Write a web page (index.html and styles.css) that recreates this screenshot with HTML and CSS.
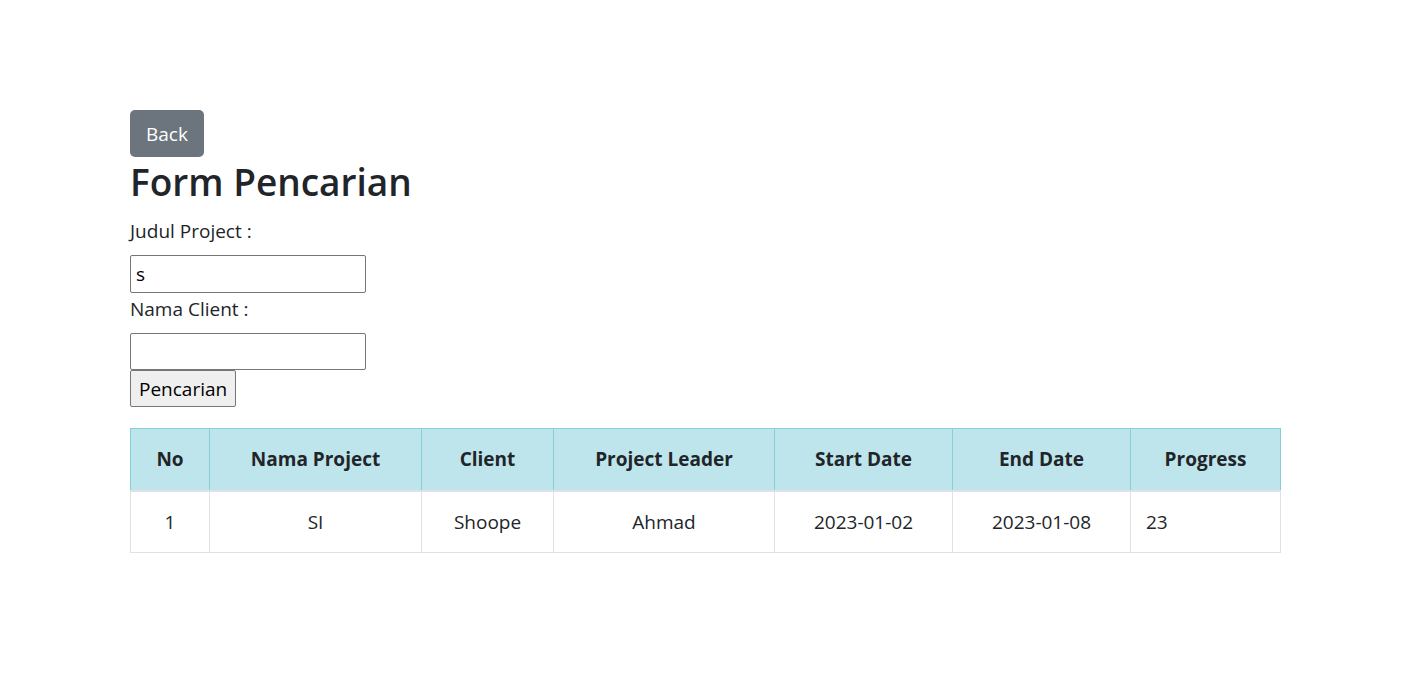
FILE: index.html
```html
<!DOCTYPE html>
<html lang="id">
<head>
<meta charset="utf-8">
<title>Form Pencarian</title>
<link rel="stylesheet" href="styles.css">
</head>
<body>
<div class="page">
  <a class="btn-back" href="#">Back</a>
  <h1 class="title">Form Pencarian</h1>
  <form class="search-form">
    <label class="field-label" for="judul">Judul Project :</label>
    <input class="field-input" id="judul" type="text" value="s">
    <label class="field-label second" for="client">Nama Client :</label>
    <input class="field-input short" id="client" type="text" value="">
    <button class="btn-search" type="button">Pencarian</button>
  </form>
  <table class="result-table">
    <thead>
      <tr>
        <th class="c-no">No</th>
        <th class="c-nama">Nama Project</th>
        <th class="c-client">Client</th>
        <th class="c-leader">Project Leader</th>
        <th class="c-start">Start Date</th>
        <th class="c-end">End Date</th>
        <th class="c-prog">Progress</th>
      </tr>
    </thead>
    <tbody>
      <tr>
        <td>1</td>
        <td>SI</td>
        <td>Shoope</td>
        <td>Ahmad</td>
        <td>2023-01-02</td>
        <td>2023-01-08</td>
        <td class="left">23</td>
      </tr>
    </tbody>
  </table>
</div>
</body>
</html>
```
FILE: styles.css
```css
* { box-sizing: border-box; }
html, body { margin: 0; padding: 0; background: #fff; }
body {
  font-family: "Open Sans", "Noto Sans", sans-serif;
  font-size: 19px;
  line-height: 30px;
  color: #212529;
}
.page {
  width: 1150px;
  margin-left: 130px;
  padding-top: 110px;
}
.btn-back {
  display: inline-flex;
  align-items: center;
  justify-content: center;
  width: 74px;
  height: 47px;
  background: #6c757d;
  color: #fff;
  border-radius: 5px;
  text-decoration: none;
  font-size: 19px;
}
.title {
  margin: 0 0 10px 0;
  font-size: 37px;
  line-height: 49px;
  font-weight: 600;
  color: #212529;
}
.search-form {
  display: flex;
  flex-direction: column;
  align-items: flex-start;
}
.field-label {
  display: block;
  line-height: 30px;
  margin-bottom: 9px;
}
.field-label.second { margin-top: 1px; }
.field-input {
  width: 236px;
  height: 38px;
  border: 1px solid #767676;
  border-radius: 2px;
  font-family: inherit;
  font-size: 19px;
  padding: 0 5px;
  color: #000;
}
.field-input.short { height: 37px; }
.btn-search {
  height: 37px;
  padding: 0 8px;
  background: #efefef;
  border: 1px solid #767676;
  border-radius: 2px;
  font-family: inherit;
  font-size: 19px;
  color: #000;
}
.result-table {
  margin-top: 21px;
  width: 1150px;
  border-collapse: collapse;
  table-layout: fixed;
}
.result-table th {
  background: #bee5eb;
  border: 1px solid #86cfda;
  border-bottom: 2px solid #dee2e6;
  height: 62px;
  font-weight: 700;
  text-align: center;
  vertical-align: middle;
  padding: 0 15px;
}
.result-table td {
  border: 1px solid #dee2e6;
  height: 62px;
  text-align: center;
  vertical-align: middle;
  padding: 0 15px;
}
.result-table td.left { text-align: left; }
.c-no { width: 79px; }
.c-nama { width: 212px; }
.c-client { width: 132px; }
.c-leader { width: 221px; }
.c-start { width: 178px; }
.c-end { width: 178px; }
.c-prog { width: 150px; }
```
